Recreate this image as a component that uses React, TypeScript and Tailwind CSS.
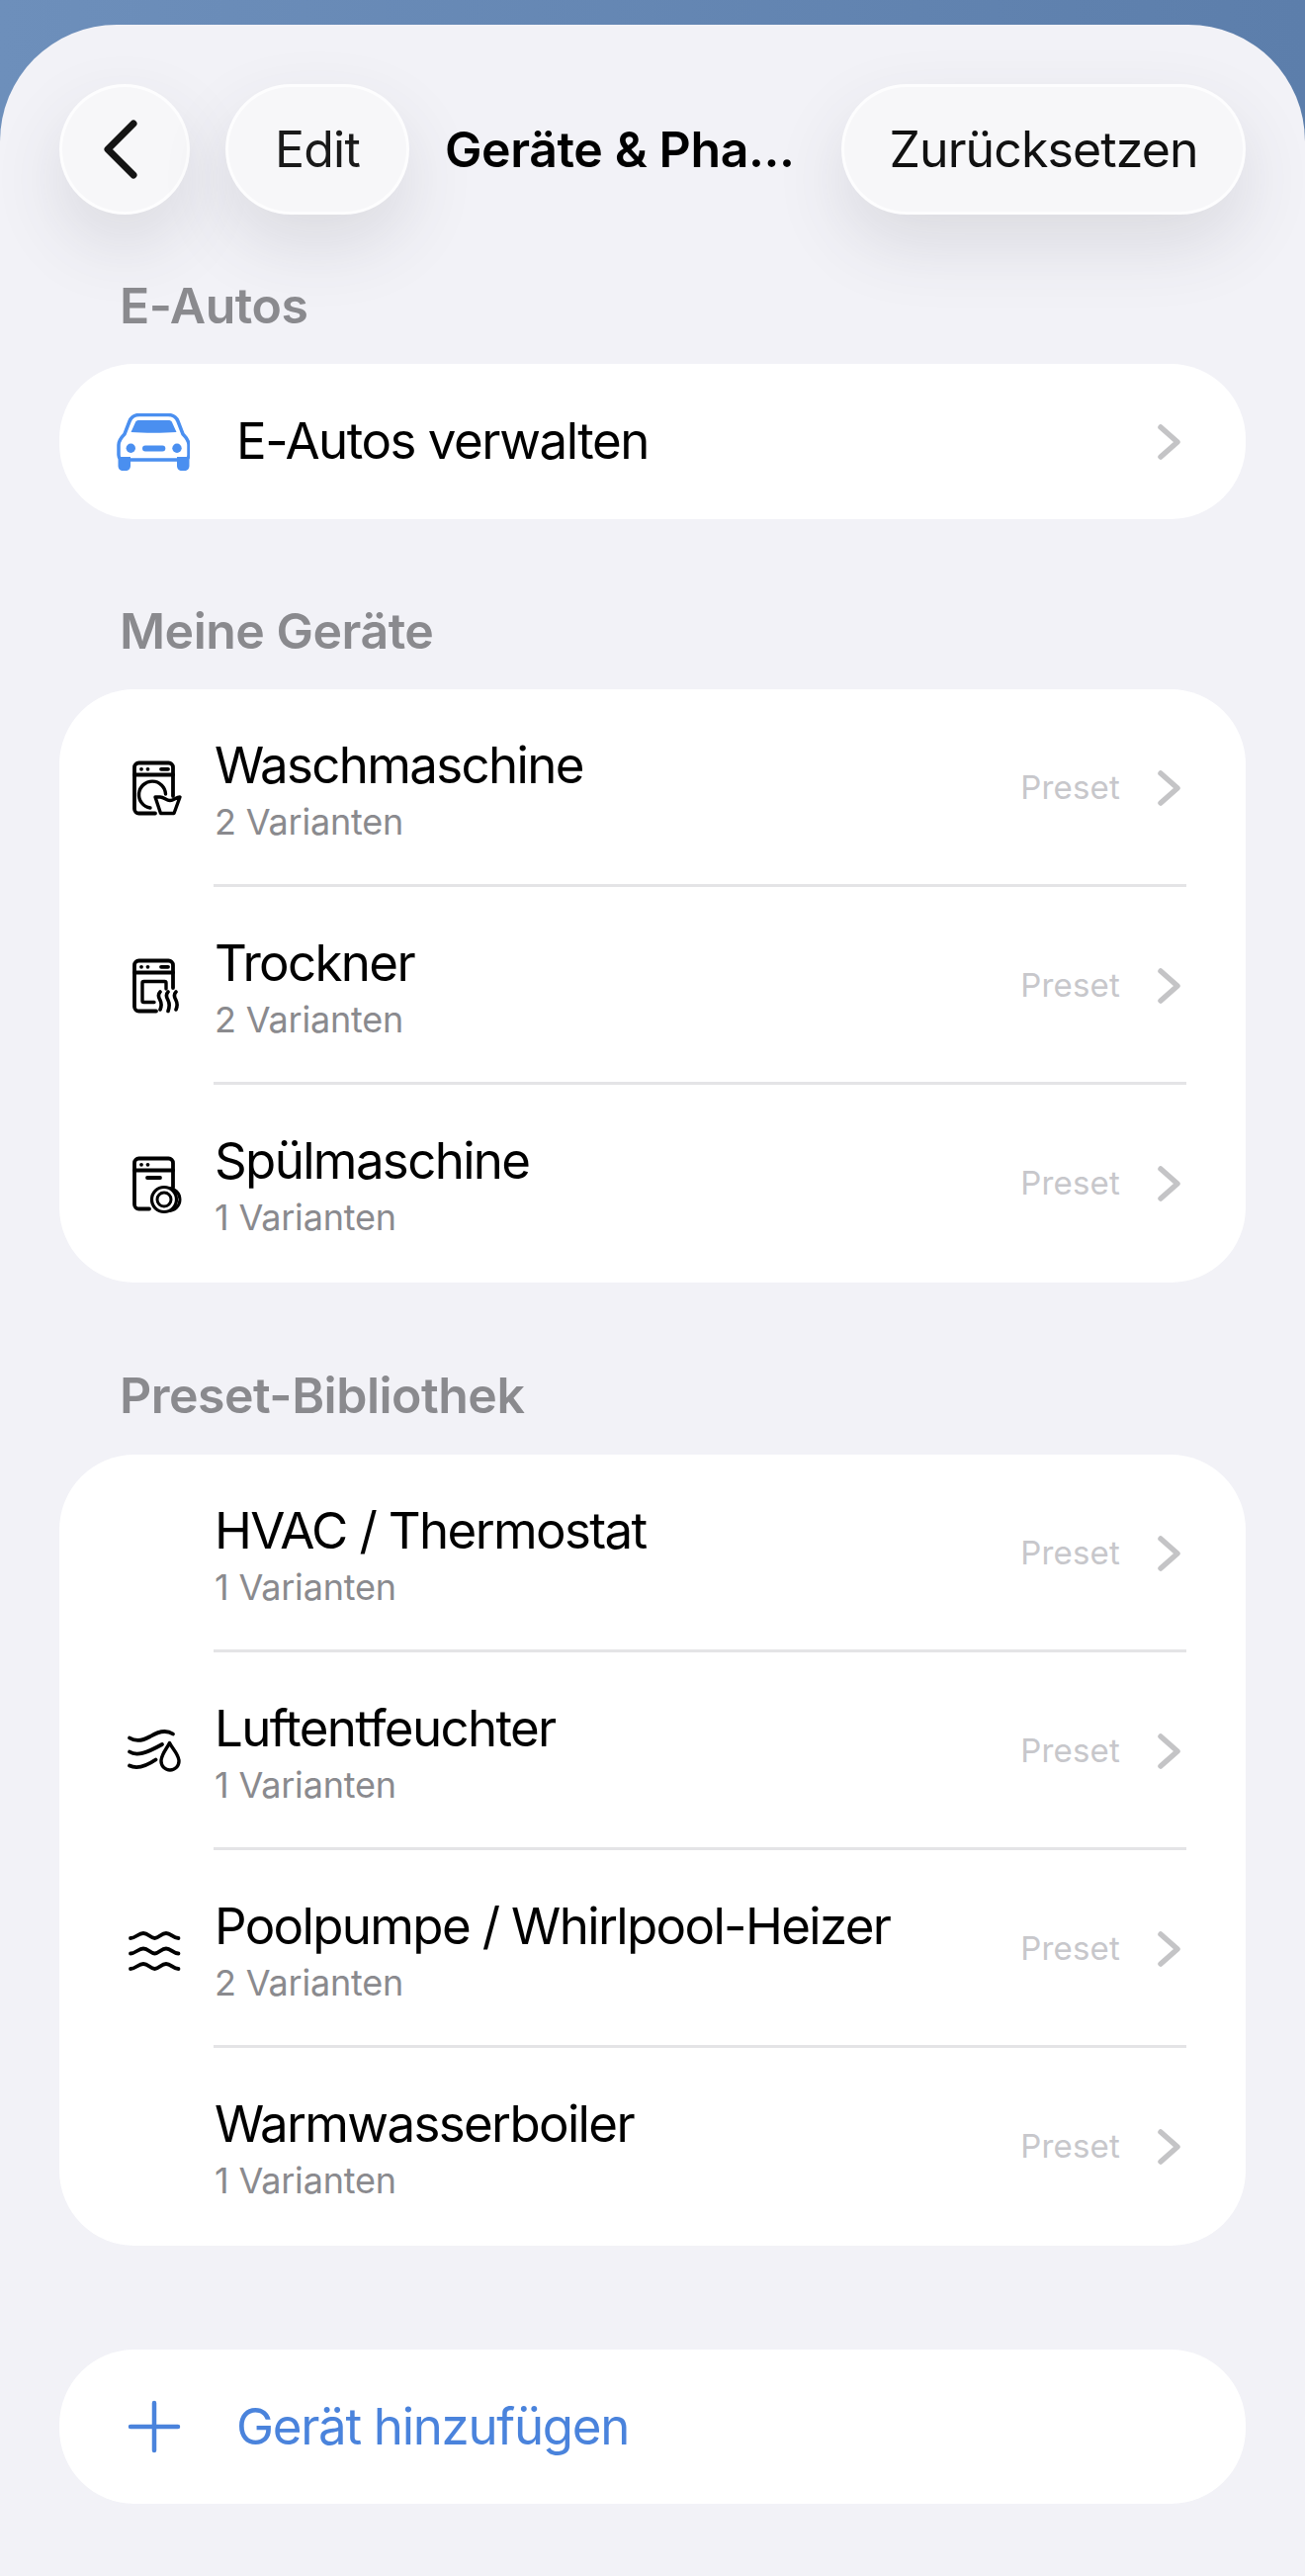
import React from 'react';

const sans = "font-['Inter','Liberation_Sans',sans-serif]";

const Chevron = ({ className = '' }: { className?: string }) => (
  <svg viewBox="0 0 26 38" className={`w-[26px] h-[38px] ${className}`} fill="none" stroke="#c4c4c6" strokeWidth="5.500" strokeLinecap="round" strokeLinejoin="round">
    <path d="M4 4 L21 19 L4 34" />
  </svg>
);

// shared frame of the appliance icons
const ApplianceFrame = ({ children, right, bottom }: { children: React.ReactNode; right: number; bottom: number }) => (
  <svg viewBox="26 14 60 64" className="w-[60px] h-[64px]" fill="none" stroke="#000" strokeWidth="3.800" strokeLinecap="round" strokeLinejoin="round">
    <path d={`M75 ${right} V25 a4.500 4.500 0 0 0 -4.500 -4.500 H40.500 a4.500 4.500 0 0 0 -4.500 4.500 V67 a4.500 4.500 0 0 0 4.500 4.500 H${bottom}`} />
    <path d="M36 32.500 H75" />
    <circle cx="43" cy="26.800" r="1.900" fill="#000" stroke="none" />
    <circle cx="49.500" cy="26.800" r="1.900" fill="#000" stroke="none" />
    {children}
  </svg>
);

const Washer = () => (
  <ApplianceFrame right={54} bottom={57}>
    <path d="M63 26.800 H70" />
    <path d="M67.500 52 A13.500 13.500 0 1 0 52 66" strokeWidth="3.400" />
    <path d="M57 55 L62.500 71.500 H76 L82 55 C78 55 76 58.500 72 58.500 C68 58.500 66 55 62 55 Z" fill="#fff" strokeWidth="3.400" />
  </ApplianceFrame>
);

const Dryer = () => (
  <ApplianceFrame right={48} bottom={58}>
    <path d="M63 26.800 H70" />
    <path d="M68 49 V43 a1.500 1.500 0 0 0 -1.500 -1.500 H45.500 a1.500 1.500 0 0 0 -1.500 1.500 V61 a1.500 1.500 0 0 0 1.500 1.500 H56" strokeWidth="3.400" />
    <path d="M62 52 c-3 3 -1.500 6 0 8.500 c1.500 3 1.500 6 0 9.500 M70 52 c-3 3 -1.500 6 0 8.500 c1.500 3 1.500 7 0 11 M78 52 c-3 3 -1.500 6 0 8.500 c1.500 3 1.500 6 0 9.500" strokeWidth="3.600" />
  </ApplianceFrame>
);

const Dishwasher = () => (
  <ApplianceFrame right={50} bottom={51}>
    <path d="M49 40 H62" />
    <circle cx="70.500" cy="62" r="11.500" strokeWidth="3" />
    <circle cx="66" cy="62" r="12.500" fill="#fff" strokeWidth="3.200" />
    <circle cx="66" cy="62" r="7" strokeWidth="3" />
  </ApplianceFrame>
);

const Dehumidifier = () => (
  <svg viewBox="26 24 60 52" className="w-[60px] h-[52px]" fill="none" stroke="#000" strokeWidth="3.800" strokeLinecap="round" strokeLinejoin="round">
    <path d="M31 36.500 C38 41 45 39 52 35 C60 30 68 28 75 32.500" />
    <path d="M31 50.500 C38 55 48 52 64 43" />
    <path d="M31 64.500 C38 68 48 65 57.500 58.500" />
    <path d="M71.500 41.500 C69 47 63 53 63 60 a9 9 0 0 0 18 0 C81 53 74 47 71.500 41.500 Z" strokeWidth="3.400" />
  </svg>
);

const PoolWaves = () => (
  <svg viewBox="26 24 60 52" className="w-[60px] h-[52px]" fill="none" stroke="#000" strokeWidth="3.800" strokeLinecap="round" strokeLinejoin="round">
    <path d="M32 39 C37 39 40 34 45 34 C50 34 52 39 56.500 39 C61 39 63 34 68 34 C73 34 75 39 80.500 39" />
    <path d="M32 54.500 C37 54.500 40 49.500 45 49.500 C50 49.500 52 54.500 56.500 54.500 C61 54.500 63 49.500 68 49.500 C73 49.500 75 54.500 80.500 54.500" />
    <path d="M32 70 C37 70 40 65 45 65 C50 65 52 70 56.500 70 C61 70 63 65 68 65 C73 65 75 70 80.500 70" />
  </svg>
);

const Car = () => (
  <svg viewBox="18 18 74 58" className="w-[74px] h-[58px]">
    <path d="M20 50 C20 45 23 42 26 39 L31 26 C33 21 36 19.500 41 19.500 H70 C75 19.500 78 21 80 26 L85 39 C88 42 91 45 91 50 V60 C91 63 89 65 86 65 H25 C22 65 20 63 20 60 Z" fill="#fff" stroke="#4a8ff0" strokeWidth="3.500" />
    <path d="M32.500 37 L37 27 C37.500 25.500 39 25 41 25 H70 C72 25 73.500 25.500 74 27 L78.500 37 C66 38 45 38 32.500 37 Z" fill="#4a8ff0" />
    <circle cx="32.300" cy="53.300" r="4.700" fill="#4a8ff0" />
    <circle cx="79" cy="53.300" r="4.700" fill="#4a8ff0" />
    <rect x="44" y="50.500" width="23.300" height="6" rx="3" fill="#4a8ff0" />
    <path d="M19.500 62 H32 V71 C32 74 30 76 27 76 H24.500 C21.500 76 19.500 74 19.500 71 Z M79 62 H91.500 V71 C91.500 74 89.500 76 86.500 76 H84 C81 76 79 74 79 71 Z" fill="#4a8ff0" />
  </svg>
);

type Device = { name: string; variants: number; icon?: React.ReactNode };

const myDevices: Device[] = [
  { name: 'Waschmaschine', variants: 2, icon: <Washer /> },
  { name: 'Trockner', variants: 2, icon: <Dryer /> },
  { name: 'Spülmaschine', variants: 1, icon: <Dishwasher /> },
];

const presets: Device[] = [
  { name: 'HVAC / Thermostat', variants: 1 },
  { name: 'Luftentfeuchter', variants: 1, icon: <Dehumidifier /> },
  { name: 'Poolpumpe / Whirlpool-Heizer', variants: 2, icon: <PoolWaves /> },
  { name: 'Warmwasserboiler', variants: 1 },
];

const SectionLabel = ({ children, className = '' }: { children: React.ReactNode; className?: string }) => (
  <h2 className={`pl-[121px] text-[50px] leading-[60px] font-semibold tracking-[-0.5px] text-[#8a8a8e] ${className}`}>{children}</h2>
);

const DeviceRow = ({ device, last }: { device: Device; last: boolean }) => (
  <div className="relative flex h-[200px] items-center pl-[66px]">
    <div className="flex w-[91px] shrink-0 justify-start">{device.icon}</div>
    <div className="flex-1 pt-[1px]">
      <div className="text-[51px] leading-[62px] tracking-[-1.65px] text-black">{device.name}</div>
      <div className="mt-[4px] text-[36px] leading-[44px] tracking-[-0.2px] text-[#8a8a8e]">{device.variants} Varianten</div>
    </div>
    <span className="mr-[37px] text-[33px] text-[#c7c7cb] tracking-[0.2px]">Preset</span>
    <Chevron className="mr-[64px]" />
    {!last && <div className="absolute bottom-0 left-[156px] right-[60px] h-[3px] bg-[#e4e4e6]" />}
  </div>
);

const DeviceCard = ({ devices }: { devices: Device[] }) => (
  <div className="overflow-hidden rounded-[76px] bg-white">
    {devices.map((d, i) => (
      <DeviceRow key={d.name} device={d} last={i === devices.length - 1} />
    ))}
  </div>
);

const pillClass =
  'flex h-[132px] shrink-0 items-center justify-center rounded-full border-[3px] border-white/80 bg-[#f7f7f9] shadow-[0_30px_70px_rgba(60,60,80,0.13)]';

export default function App() {
  return (
    <div className={`h-[2605px] w-[1320px] overflow-hidden bg-gradient-to-r from-[#6d8fbb] to-[#5c7eab] pt-[25px] ${sans}`}>
      <div className="h-[2580px] rounded-t-[118px] bg-[#f2f2f7]">
        {/* Nav bar */}
        <div className="flex items-center pl-[60px] pr-[60px] pt-[60px]">
          <button className={`${pillClass} w-[132px]`}>
            <svg viewBox="0 0 40 60" className="-ml-[9px] h-[60px] w-[40px]" fill="none" stroke="#141414" strokeWidth="7" strokeLinecap="round" strokeLinejoin="round">
              <path d="M33 4 L7 30 L33 56" />
            </svg>
          </button>
          <button className={`${pillClass} ml-[36px] w-[186px] text-[50px] tracking-[-0.8px] text-[#1a1a1a]`}>Edit</button>
          <h1 className="ml-[36px] flex-1 text-[50px] font-semibold tracking-[-0.4px] whitespace-nowrap text-black">Geräte &amp; Pha...</h1>
          <button className={`${pillClass} w-[409px] text-[50px] tracking-[-0.9px] text-[#111]`}>Zurücksetzen</button>
        </div>

        <SectionLabel className="mt-[62px]">E-Autos</SectionLabel>
        <div className="mx-[60px] mt-[29px] flex h-[157px] items-center rounded-[76px] bg-white pl-[58px]">
          <Car />
          <span className="ml-[47px] flex-1 text-[51px] tracking-[-1.5px] text-black">E-Autos verwalten</span>
          <Chevron className="mr-[64px]" />
        </div>

        <SectionLabel className="mt-[83px]">Meine Geräte</SectionLabel>
        <div className="mx-[60px] mt-[29px]">
          <DeviceCard devices={myDevices} />
        </div>

        <SectionLabel className="mt-[84px]">Preset-Bibliothek</SectionLabel>
        <div className="mx-[60px] mt-[30px]">
          <DeviceCard devices={presets} />
        </div>

        {/* Add device */}
        <div className="mx-[60px] mt-[105px] flex h-[156px] items-center rounded-[76px] bg-white pl-[69px]">
          <svg viewBox="0 0 54 54" className="h-[54px] w-[54px]" fill="none" stroke="#4a83dc" strokeWidth="4.500" strokeLinecap="round">
            <path d="M27 3 V51 M3 27 H51" />
          </svg>
          <span className="ml-[56px] text-[51px] tracking-[-1.3px] text-[#4a83dc]">Gerät hinzufügen</span>
        </div>
      </div>
    </div>
  );
}
